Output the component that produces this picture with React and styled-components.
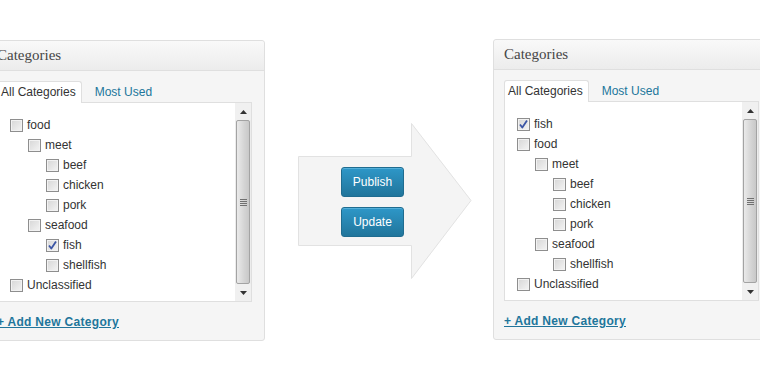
import React from "react";
import styled, { createGlobalStyle } from "styled-components";

const GlobalStyle = createGlobalStyle`
  html, body {
    margin: 0;
    padding: 0;
    background: #fff;
  }
  body {
    font-family: "Liberation Sans", Arial, sans-serif;
    font-size: 12px;
    color: #333;
  }
`;

const Stage = styled.div`
  display: flex;
  align-items: flex-start;
  width: 760px;
  height: 376px;
  overflow: hidden;
  padding-top: 39px;
  box-sizing: border-box;
`;

const Panel = styled.div`
  flex: none;
  width: 279px;
  height: 301px;
  box-sizing: border-box;
  margin-top: ${p => p.offsetTop || 0}px;
  margin-left: ${p => p.offsetLeft || 0}px;
  border: 1px solid #dfdfdf;
  border-radius: 3px;
  background: #f5f5f5;
  display: flex;
  flex-direction: column;
`;

const PanelHeader = styled.div`
  height: 29px;
  line-height: 29px;
  padding: 0 10px;
  border-bottom: 1px solid #dfdfdf;
  background: linear-gradient(#f9f9f9, #ececec);
  border-radius: 3px 3px 0 0;
  font-family: "Liberation Serif", Georgia, serif;
  font-size: 15px;
  color: #464646;
`;

const PanelBody = styled.div`
  padding: 10px 12px 0 10px;
  display: flex;
  flex-direction: column;
`;

const Tabs = styled.div`
  display: flex;
  align-items: flex-end;
  gap: 10px;
  height: 21px;
  position: relative;
  z-index: 1;
`;

const Tab = styled.div`
  height: 20px;
  line-height: 20px;
  padding: 0 5px 0 3px;
  box-sizing: border-box;
  color: ${p => (p.active ? "#333" : "#21759b")};
  ${p =>
    p.active &&
    `
    background: #fff;
    border: 1px solid #dfdfdf;
    border-bottom: none;
    border-radius: 3px 3px 0 0;
    margin-bottom: -1px;
    height: 22px;
  `}
`;

const ListBox = styled.div`
  height: 200px;
  box-sizing: border-box;
  border: 1px solid #dfdfdf;
  background: #fff;
  display: flex;
`;

const List = styled.ul`
  flex: 1;
  list-style: none;
  margin: 0;
  padding: 12px 0 0 12px;
  overflow: hidden;
`;

const Row = styled.li`
  display: flex;
  align-items: center;
  gap: 4px;
  height: 20px;
  padding-left: ${p => p.level * 18}px;
  white-space: nowrap;
`;

const Box = styled.span`
  flex: none;
  width: 13px;
  height: 13px;
  box-sizing: border-box;
  border: 1px solid #8e8e8e;
  background: linear-gradient(135deg, #d6d6d6, #f4f4f4);
  box-shadow: inset 0 0 0 1px #f2f2f2;
  display: flex;
  align-items: center;
  justify-content: center;
`;

const Scrollbar = styled.div`
  flex: none;
  width: 16px;
  background: #ececec;
  display: flex;
  flex-direction: column;
`;

const ScrollButton = styled.div`
  height: 17px;
  display: flex;
  align-items: center;
  justify-content: center;
  background: #f0f0f0;
`;

const Thumb = styled.div`
  flex: 1;
  margin: 0 1px;
  border: 1px solid #a3a3a3;
  border-radius: 2px;
  background: linear-gradient(90deg, #eaeaea, #d4d4d4 60%, #c8c8c8);
  display: flex;
  align-items: center;
  justify-content: center;
`;

const Grip = styled.div`
  width: 7px;
  height: 7px;
  background: repeating-linear-gradient(#707070 0 1px, transparent 1px 2px);
`;

const LinkArea = styled.div`
  height: 38px;
  display: flex;
  align-items: center;
`;

const AddLink = styled.a`
  font-weight: bold;
  color: #21759b;
  text-decoration: underline;
  letter-spacing: 0.3px;
  padding-top: 2px;
`;

const ArrowWrap = styled.div`
  flex: none;
  position: relative;
  width: 174px;
  height: 157px;
  margin: 84px 21px 0 33px;
`;

const ButtonStack = styled.div`
  position: absolute;
  top: 44px;
  left: 43px;
  display: flex;
  flex-direction: column;
  gap: 10px;
`;

const Button = styled.button`
  width: 63px;
  height: 30px;
  border: 1px solid #1f6c90;
  border-radius: 3px;
  background: linear-gradient(#2e97c8, #21759b);
  color: #fff;
  font-family: "Liberation Sans", Arial, sans-serif;
  font-size: 12px;
  padding: 0;
  box-shadow: inset 0 1px 0 rgba(120, 200, 235, 0.5);
`;

const Check = () => (
  <svg width="11" height="11" viewBox="0 0 11 11">
    <path d="M2 5.5 L4.3 8.5 L9 1.5" fill="none" stroke="#3b55a5" strokeWidth="1.8" strokeLinejoin="round" />
  </svg>
);

const Triangle = ({ down }) => (
  <svg width="7" height="4" viewBox="0 0 7 4">
    <path d={down ? "M0 0 H7 L3.5 4 Z" : "M0 4 H7 L3.5 0 Z"} fill="#333" />
  </svg>
);

const leftItems = [
  { name: "food", level: 0 },
  { name: "meet", level: 1 },
  { name: "beef", level: 2 },
  { name: "chicken", level: 2 },
  { name: "pork", level: 2 },
  { name: "seafood", level: 1 },
  { name: "fish", level: 2, checked: true },
  { name: "shellfish", level: 2 },
  { name: "Unclassified", level: 0 }
];

const rightItems = [
  { name: "fish", level: 0, checked: true },
  { name: "food", level: 0 },
  { name: "meet", level: 1 },
  { name: "beef", level: 2 },
  { name: "chicken", level: 2 },
  { name: "pork", level: 2 },
  { name: "seafood", level: 1 },
  { name: "shellfish", level: 2 },
  { name: "Unclassified", level: 0 }
];

const CategoryPanel = ({ items, offsetTop, offsetLeft }) => (
  <Panel offsetTop={offsetTop} offsetLeft={offsetLeft}>
    <PanelHeader>Categories</PanelHeader>
    <PanelBody>
      <Tabs>
        <Tab active>All Categories</Tab>
        <Tab>Most Used</Tab>
      </Tabs>
      <ListBox>
        <List>
          {items.map(item => (
            <Row key={item.name} level={item.level}>
              <Box>{item.checked && <Check />}</Box>
              {item.name}
            </Row>
          ))}
        </List>
        <Scrollbar>
          <ScrollButton>
            <Triangle />
          </ScrollButton>
          <Thumb>
            <Grip />
          </Thumb>
          <ScrollButton>
            <Triangle down />
          </ScrollButton>
        </Scrollbar>
      </ListBox>
      <LinkArea>
        <AddLink>+ Add New Category</AddLink>
      </LinkArea>
    </PanelBody>
  </Panel>
);

const Arrow = () => (
  <ArrowWrap>
    <svg width="174" height="157" viewBox="0 0 174 157">
      <polygon
        points="0.5,33.5 113.5,33.5 113.5,0.5 173,77.5 113.5,155.5 113.5,122.5 0.5,122.5"
        fill="#f4f4f4"
        stroke="#e2e2e2"
      />
    </svg>
    <ButtonStack>
      <Button>Publish</Button>
      <Button>Update</Button>
    </ButtonStack>
  </ArrowWrap>
);

const App = () => (
  <>
    <GlobalStyle />
    <Stage>
      <CategoryPanel items={leftItems} offsetTop={1} offsetLeft={-14} />
      <Arrow />
      <CategoryPanel items={rightItems} />
    </Stage>
  </>
);

export default App;
